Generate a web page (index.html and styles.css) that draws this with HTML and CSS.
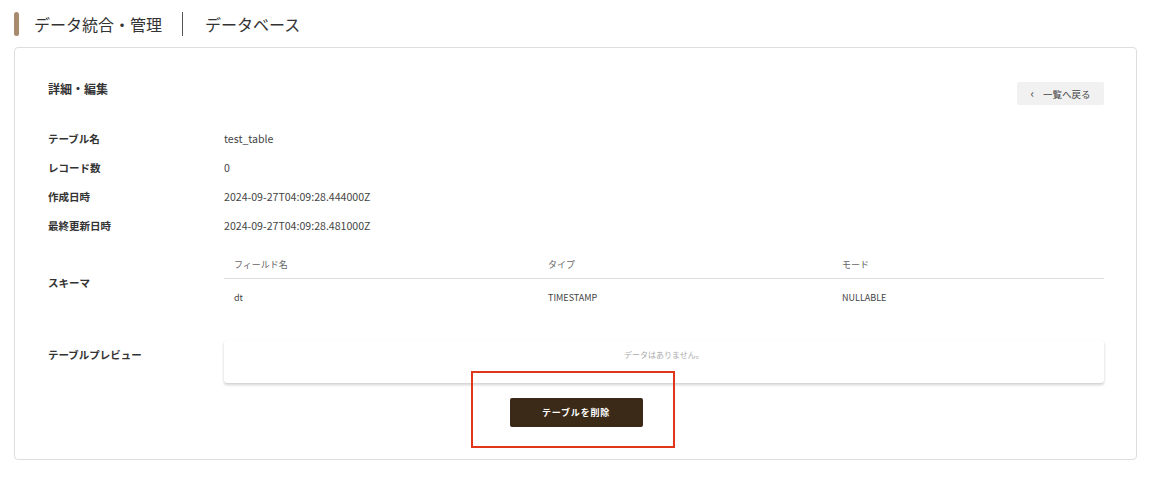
FILE: index.html
```html
<!DOCTYPE html>
<html lang="ja">
<head>
  <meta name="viewport" content="width=device-width, initial-scale=1.0" />
  <title>データベース</title>
  <link rel="stylesheet" href="styles.css">
</head>
<body>

  <header class="page-header">
    <span class="accent"></span>
    <span class="crumb">データ統合・管理</span>
    <span class="divider"></span>
    <span class="crumb">データベース</span>
  </header>

  <main class="card">
    <div class="card-head">
      <h2>詳細・編集</h2>
      <button class="back-btn" type="button"><span class="chevron">&lsaquo;</span>一覧へ戻る</button>
    </div>

    <dl class="detail">
      <div class="row">
        <dt>テーブル名</dt>
        <dd>test_table</dd>
      </div>
      <div class="row">
        <dt>レコード数</dt>
        <dd>0</dd>
      </div>
      <div class="row">
        <dt>作成日時</dt>
        <dd>2024-09-27T04:09:28.444000Z</dd>
      </div>
      <div class="row">
        <dt>最終更新日時</dt>
        <dd>2024-09-27T04:09:28.481000Z</dd>
      </div>
      <div class="row schema-row">
        <dt>スキーマ</dt>
        <dd>
          <table class="schema">
            <thead>
              <tr>
                <th class="col-name">フィールド名</th>
                <th class="col-type">タイプ</th>
                <th>モード</th>
              </tr>
            </thead>
            <tbody>
              <tr>
                <td>dt</td>
                <td>TIMESTAMP</td>
                <td>NULLABLE</td>
              </tr>
            </tbody>
          </table>
        </dd>
      </div>
      <div class="row preview-row">
        <dt>テーブルプレビュー</dt>
        <dd>
          <div class="preview">データはありません。</div>
        </dd>
      </div>
    </dl>

    <div class="actions">
      <button class="delete-btn" type="button">テーブルを削除</button>
      <span class="highlight"></span>
    </div>
  </main>

</body>
</html>
```

FILE: styles.css
```css
body {
  margin: 0;
  padding: 11px 14px 0;
  background: #fff;
  color: #333;
  font-family: "Noto Sans CJK JP", "Noto Sans", sans-serif;
}

.page-header {
  display: flex;
  align-items: center;
  height: 25px;
  margin-bottom: 11px;
}

.accent {
  width: 5px;
  height: 24px;
  border-radius: 3px;
  background: #a88b6f;
  margin-right: 15px;
}

.crumb {
  font-size: 16px;
  color: #333;
}

.divider {
  width: 1px;
  height: 24px;
  background: #555;
  margin: 0 22px 0 20px;
}

.card {
  border: 1px solid #ddd;
  border-radius: 4px;
  padding: 33px 32px 31px 33px;
  height: 347px;
}

.card-head {
  display: flex;
  justify-content: space-between;
  align-items: center;
  height: 24px;
  margin-bottom: 19px;
}

.card-head h2 {
  margin: 0;
  font-size: 12px;
  font-weight: bold;
  color: #333;
  position: relative;
  top: -5px;
}

.back-btn {
  display: flex;
  align-items: center;
  justify-content: center;
  font-family: inherit;
  font-size: 9.5px;
  color: #444;
  background: #f1f1f1;
  border: none;
  border-radius: 2px;
  width: 87px;
  height: 23px;
  padding: 0;
  margin-top: 1px;
}

.back-btn .chevron {
  font-size: 12px;
  line-height: 1;
  margin: -2px 9px 0 0;
}

.detail {
  margin: 0;
}

.row {
  display: flex;
  align-items: center;
  min-height: 29px;
}

.row dt {
  width: 176px;
  font-size: 10.5px;
  font-weight: bold;
  color: #333;
}

.row dd {
  margin: 0;
  flex: 1;
  font-size: 10.6px;
  color: #444;
}

.schema-row {
  margin-top: 10px;
}

.schema {
  width: 100%;
  border-collapse: collapse;
  font-size: 9px;
  color: #444;
}

.schema th {
  text-align: left;
  font-weight: normal;
  color: #666;
  height: 28px;
  padding: 0 10px;
  border-bottom: 1px solid #ddd;
}

.schema td {
  height: 36px;
  padding: 0 10px;
}

.schema .col-name {
  width: 294px;
}

.schema .col-type {
  width: 274px;
}

.preview-row {
  align-items: flex-start;
  margin-top: 25px;
}

.preview-row dt {
  line-height: 30px;
}

.preview {
  height: 43px;
  box-sizing: border-box;
  padding-top: 9px;
  text-align: center;
  font-size: 8px;
  color: #aaa;
  background: #fff;
  border-radius: 3px;
  box-shadow: 0 2px 3px rgba(0, 0, 0, 0.18), 0 0 1px rgba(0, 0, 0, 0.08);
}

.actions {
  position: relative;
  display: flex;
  justify-content: center;
  margin-top: 15px;
}

.delete-btn {
  font-family: inherit;
  font-size: 9px;
  font-weight: bold;
  letter-spacing: 0.8px;
  color: #fff;
  background: #3b2a18;
  border: none;
  border-radius: 2px;
  width: 133px;
  height: 29px;
  padding: 0;
}

.highlight {
  position: absolute;
  left: 423px;
  top: -27px;
  width: 200px;
  height: 73px;
  border: 2px solid #e0361a;
}
```
